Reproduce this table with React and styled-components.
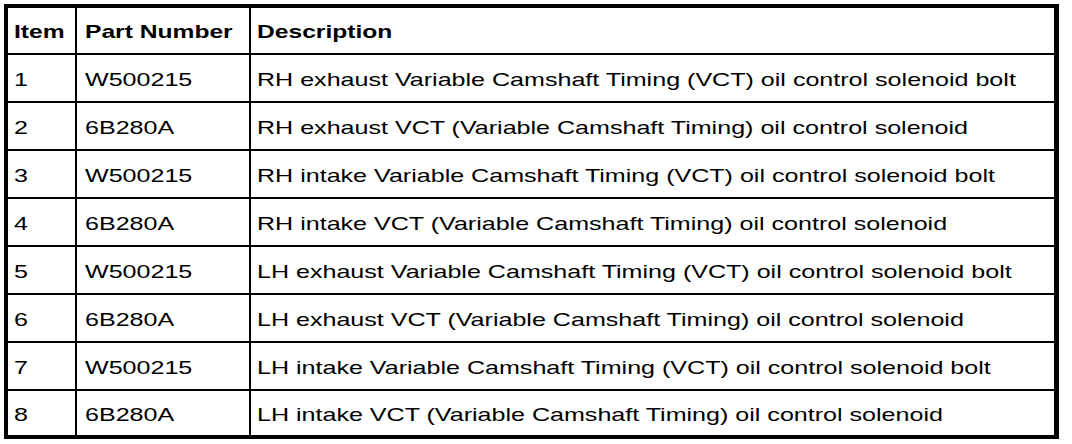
import React from "react";
import styled, { createGlobalStyle } from "styled-components";

const GlobalStyle = createGlobalStyle`
  html, body {
    margin: 0;
    padding: 0;
    background: #ffffff;
  }
  body {
    font-family: "Liberation Sans", Arial, Helvetica, sans-serif;
    color: #000;
  }
`;

const Page = styled.div`
  padding: 4px 0 0 4px;
  width: 1072px;
  height: 444px;
  box-sizing: border-box;
  background: #fff;
`;

const Table = styled.div`
  display: grid;
  grid-template-columns: 67px 172px 803px;
  grid-template-rows: 45px repeat(7, 46px) 44px;
  gap: 2px;
  background: #000;
  border: 4px solid #000;
  border-right-width: 5px;
  width: max-content;
`;

const Cell = styled.div`
  background: #fff;
  display: flex;
  align-items: center;
  padding-left: ${(p) => p.$pad}px;
  overflow: visible;
`;

const Text = styled.span`
  display: inline-block;
  white-space: nowrap;
  font-family: "Liberation Sans", Arial, Helvetica, sans-serif;
  font-size: 18.5px;
  line-height: 1;
  font-weight: ${(p) => (p.$head ? 700 : 400)};
  transform: scaleX(${(p) => (p.$head ? 1.33 : 1.355)});
  transform-origin: left center;
  position: relative;
  top: 2px;
`;

const pads = [6, 8, 6];

const rows = [
  ["1", "W500215", "RH exhaust Variable Camshaft Timing (VCT) oil control solenoid bolt"],
  ["2", "6B280A", "RH exhaust VCT (Variable Camshaft Timing) oil control solenoid"],
  ["3", "W500215", "RH intake Variable Camshaft Timing (VCT) oil control solenoid bolt"],
  ["4", "6B280A", "RH intake VCT (Variable Camshaft Timing) oil control solenoid"],
  ["5", "W500215", "LH exhaust Variable Camshaft Timing (VCT) oil control solenoid bolt"],
  ["6", "6B280A", "LH exhaust VCT (Variable Camshaft Timing) oil control solenoid"],
  ["7", "W500215", "LH intake Variable Camshaft Timing (VCT) oil control solenoid bolt"],
  ["8", "6B280A", "LH intake VCT (Variable Camshaft Timing) oil control solenoid"],
];

const head = ["Item", "Part Number", "Description"];

export default function App() {
  return (
    <>
      <GlobalStyle />
      <Page>
        <Table>
          {head.map((h, i) => (
            <Cell key={"h" + i} $pad={pads[i]}>
              <Text $head>{h}</Text>
            </Cell>
          ))}
          {rows.map((r, ri) =>
            r.map((c, ci) => (
              <Cell key={ri + "-" + ci} $pad={pads[ci]}>
                <Text>{c}</Text>
              </Cell>
            ))
          )}
        </Table>
      </Page>
    </>
  );
}
